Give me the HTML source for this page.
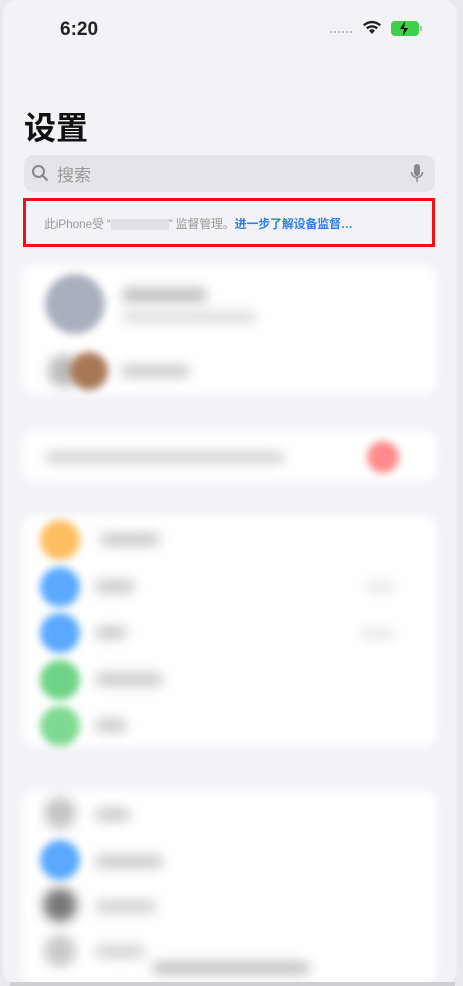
<!DOCTYPE html>
<html><head><meta charset="utf-8"><style>
*{margin:0;padding:0;box-sizing:border-box}
body{width:463px;height:986px;overflow:hidden;background:#e9e9ee;font-family:"Liberation Sans","Noto Sans CJK SC",sans-serif;position:relative}
.frame{position:absolute;left:3px;top:0;width:454px;height:984px;background:#f2f2f7;border-radius:14px}
.abs{position:absolute}
.bl{filter:blur(6px)}
.card{position:absolute;left:22px;width:415px;background:#fff;border-radius:12px;filter:blur(5px)}
.ic{position:absolute;width:40px;height:40px;border-radius:50%;left:40px}
.tx{position:absolute;height:13px;background:#c9c9cc;border-radius:6px;left:95px}
.ib{filter:blur(4px)}
</style></head><body>
<div class="frame"></div>
<div class="abs" style="left:60px;top:19px;font-size:19px;font-weight:bold;color:#222">6:20</div>
<div class="abs" style="left:330px;top:31px;width:22px;height:3px;border-top:2px dotted #bbb"></div>
<svg class="abs" style="left:362px;top:20px" width="20" height="16" viewBox="0 0 20 16"><path d="M10 14l3-3.5a4 4 0 0 0-6 0z M4 7.5a9 9 0 0 1 12 0l-1.6 1.8a6.5 6.5 0 0 0-8.8 0z M1 4.5a13 13 0 0 1 18 0l-1.6 1.8a10.5 10.5 0 0 0-14.8 0z" fill="#222"/></svg>
<div class="abs" style="left:391px;top:21px;width:28px;height:15px;border-radius:4px;background:#3fd14a"></div>
<div class="abs" style="left:420px;top:26px;width:2px;height:5px;background:#bbb"></div>
<svg class="abs" style="left:398px;top:20px" width="12" height="17" viewBox="0 0 12 17"><path d="M7 1L2 9h4l-1 7 5-8H6z" fill="#111"/></svg>
<div class="abs" style="left:24px;top:103px;font-size:32px;font-weight:bold;color:#111">设置</div>
<div class="abs" style="left:24px;top:155px;width:411px;height:37px;background:#e4e4e9;border-radius:10px"></div>
<svg class="abs" style="left:31px;top:164px" width="18" height="18" viewBox="0 0 18 18"><circle cx="7.5" cy="7.5" r="5.5" fill="none" stroke="#888" stroke-width="2"/><path d="M11.5 11.5l5 5" stroke="#888" stroke-width="2"/></svg>
<div class="abs" style="left:57px;top:161px;font-size:17px;color:#999">搜索</div>
<svg class="abs" style="left:410px;top:163px" width="14" height="22" viewBox="0 0 14 22"><rect x="4" y="1" width="6" height="12" rx="3" fill="#888"/><path d="M1.5 9a5.5 5.5 0 0 0 11 0M7 15v4" stroke="#888" stroke-width="1.5" fill="none"/></svg>
<div class="abs" style="left:23px;top:198px;width:412px;height:49px;border:3.5px solid #f01010"></div>
<div class="abs" style="left:44px;top:215px;font-size:12px;color:#999;white-space:nowrap;letter-spacing:-0.2px">此iPhone受 “<span style="display:inline-block;width:58px;height:11px;background:#e2e2e6;vertical-align:middle"></span>” 监督管理。<span style="color:#2f7fe8;font-weight:bold">进一步了解设备监督…</span></div>

<div class="card" style="top:265px;height:130px"></div>
<div class="ic ib" style="left:45px;top:274px;width:60px;height:60px;background:#a9afbd"></div>
<div class="tx bl" style="left:122px;top:288px;width:85px;height:14px;background:#bcbcbf"></div>
<div class="tx bl" style="left:122px;top:312px;width:135px;height:10px;background:#d8d8da"></div>
<div class="ic bl" style="left:48px;top:355px;width:32px;height:32px;background:#bbb"></div>
<div class="ic ib" style="left:70px;top:352px;width:38px;height:38px;background:#a77856"></div>
<div class="tx bl" style="left:120px;top:365px;width:70px;height:12px;background:#c8c8cb"></div>

<div class="card" style="top:430px;height:52px"></div>
<div class="tx bl" style="left:45px;top:452px;width:240px;height:11px;background:#cfcfd2"></div>
<div class="ic ib" style="left:367px;top:441px;width:32px;height:32px;background:#ff8a8a"></div>

<div class="card" style="top:515px;height:232px"></div>
<div class="ic ib" style="top:520px;background:#ffbe62"></div>
<div class="ic ib" style="top:567px;background:#5aa9ff"></div>
<div class="ic ib" style="top:613px;background:#5aa9ff"></div>
<div class="ic ib" style="top:660px;background:#6fd487"></div>
<div class="ic ib" style="top:706px;background:#7ed992"></div>
<div class="tx bl" style="left:100px;top:533px;width:60px"></div>
<div class="tx bl" style="top:580px;width:40px"></div>
<div class="tx bl" style="top:626px;width:32px"></div>
<div class="tx bl" style="top:673px;width:68px"></div>
<div class="tx bl" style="top:719px;width:32px"></div>
<div class="tx bl" style="left:365px;top:583px;width:30px;height:8px;background:#e0e0e2"></div>
<div class="tx bl" style="left:360px;top:630px;width:35px;height:8px;background:#e0e0e2"></div>

<div class="card" style="top:790px;height:196px"></div>
<div class="ic bl" style="top:797px;width:32px;height:32px;left:44px;background:#c4c4c6"></div>
<div class="ic ib" style="top:840px;background:#5aa9ff"></div>
<div class="ic bl" style="top:888px;width:34px;height:34px;left:43px;background:#777"></div>
<div class="ic bl" style="top:935px;width:32px;height:32px;left:44px;background:#c8c8ca"></div>
<div class="tx bl" style="top:808px;width:35px"></div>
<div class="tx bl" style="top:855px;width:68px"></div>
<div class="tx bl" style="top:900px;width:62px;background:#d2d2d4"></div>
<div class="tx bl" style="top:945px;width:50px;background:#d2d2d4"></div>
<div class="tx bl" style="left:152px;top:962px;width:158px;height:12px;background:#bdbdc0"></div>
<div class="abs" style="left:10px;top:982px;width:445px;height:4px;background:#cfcfd3"></div>
</body></html>
